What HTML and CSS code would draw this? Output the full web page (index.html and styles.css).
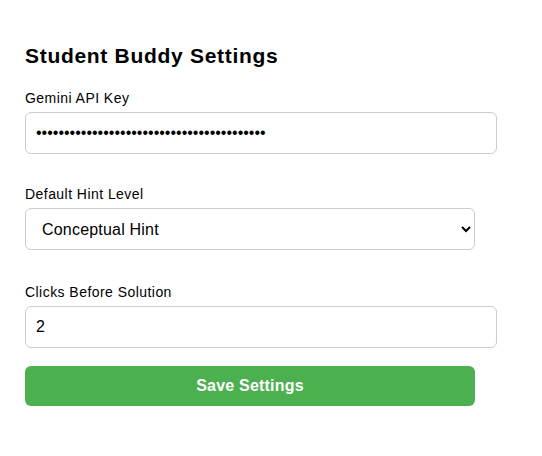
FILE: index.html
```html
<!DOCTYPE html>
<html>
<head>
<meta charset="utf-8">
<link rel="stylesheet" href="styles.css">
</head>
<body>
<div class="popup">
  <h2 class="title">Student Buddy Settings</h2>
  <div class="group">
    <label class="label" for="key">Gemini API Key</label>
    <input class="field wide" id="key" type="password" value="AIzaSyD3xQ9kLmP7vW2nR5tY8uB1cE4fG6hJ0kLaQ">
  </div>
  <div class="group mid">
    <label class="label" for="hint">Default Hint Level</label>
    <select class="field select" id="hint">
      <option>Conceptual Hint</option>
      <option>Detailed Hint</option>
    </select>
  </div>
  <div class="group last">
    <label class="label" for="clicks">Clicks Before Solution</label>
    <input class="field wide" id="clicks" type="number" value="2">
  </div>
  <button class="save">Save Settings</button>
</div>
</body>
</html>
```

FILE: styles.css
```css
html, body {
  margin: 0;
  padding: 0;
  background: #fff;
}
.popup {
  width: 450px;
  padding: 44px 25px 0;
  font-family: "Liberation Sans", Arial, sans-serif;
  color: #000;
  display: flex;
  flex-direction: column;
}
.title {
  font-size: 21px;
  line-height: 23px;
  letter-spacing: 0.7px;
  font-weight: bold;
  margin: 0 0 23px;
}
.group {
  display: flex;
  flex-direction: column;
  margin-bottom: 32px;
}
.group.mid {
  margin-bottom: 34px;
}
.group.last {
  margin-bottom: 18px;
}
.label {
  display: block;
  font-size: 14px;
  line-height: 16px;
  letter-spacing: 0.45px;
  margin-bottom: 6px;
}
.field {
  box-sizing: border-box;
  height: 42px;
  border: 1px solid #ccc;
  border-radius: 6px;
  padding: 0 10px;
  font-family: "Liberation Sans", Arial, sans-serif;
  font-size: 16px;
  color: #000;
  background: #fff;
  outline: none;
}
.wide {
  width: 472px;
}
.select {
  width: 450px;
  padding: 0 10px 0 12px;
  letter-spacing: 0.2px;
}
.save {
  width: 450px;
  height: 40px;
  border: none;
  border-radius: 6px;
  background: #4caf50;
  color: #fff;
  font-family: "Liberation Sans", Arial, sans-serif;
  font-size: 16px;
  font-weight: bold;
  letter-spacing: 0.2px;
  cursor: pointer;
}
```
